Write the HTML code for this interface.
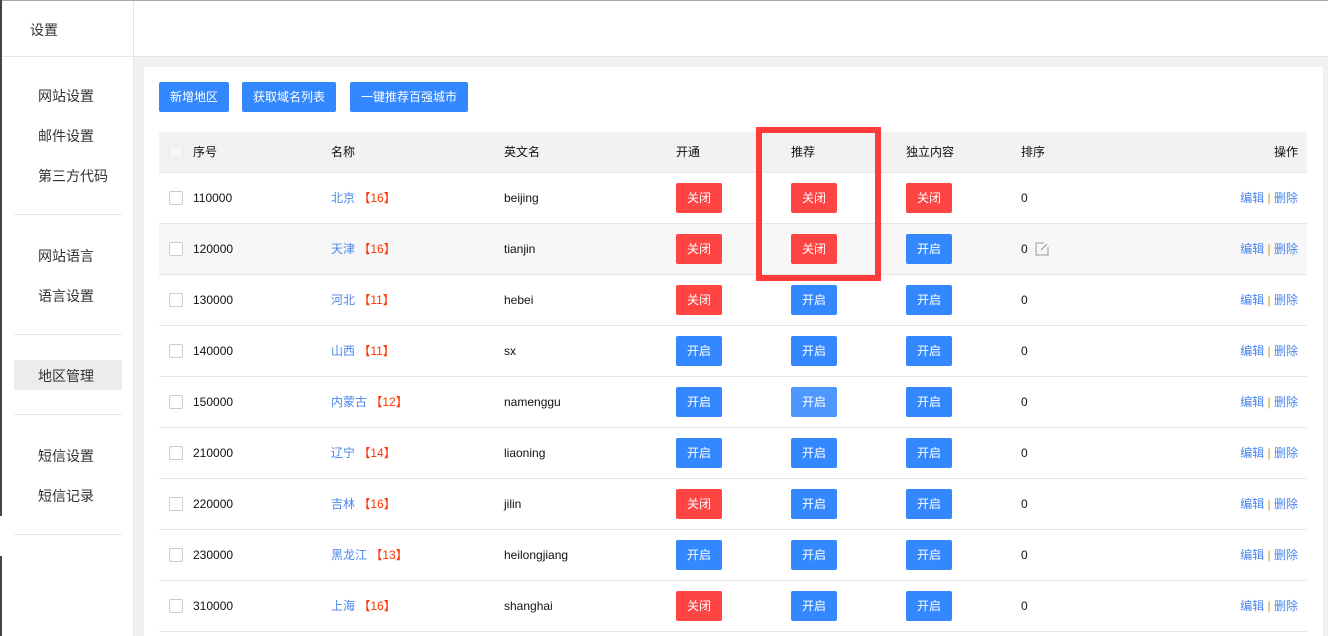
<!DOCTYPE html>
<html><head><meta charset="utf-8"><style>
*{margin:0;padding:0;box-sizing:border-box}
body{width:1328px;height:636px;overflow:hidden;background:#fff;font-family:"Liberation Sans","Noto Sans CJK SC",sans-serif;font-size:12px;color:#111;position:relative}
.a{position:absolute}
.side{left:0;top:0;width:134px;height:636px;background:#fff;border-right:1px solid #e6e6e6}
.nav{position:absolute;left:38px;font-size:14px;color:#333}
.hr{position:absolute;left:14px;width:108px;height:1px;background:#e6e6e6}
.btn{position:absolute;height:30px;line-height:30px;color:#fff;background:#3388ff;border-radius:2px;font-size:12px;text-align:center}
.b{position:absolute;width:46px;height:30px;line-height:30px;color:#fff;border-radius:2px;font-size:12px;text-align:center}
.r{background:#ff4444}.g{background:#3388ff}
.row{position:absolute;left:159px;width:1148px;height:51px;border-bottom:1px solid #e6e6e6}
.cb{position:absolute;left:10px;width:14px;height:14px;border:1px solid #ccc;border-radius:2px;top:18px;background:#fff}
.t{position:absolute;top:18px;line-height:14px}
</style></head><body>
<div class="a" style="left:134px;top:56px;width:1194px;height:580px;background:#f0f0f0;border-top:1px solid #e2e2e2"></div>
<div class="a" style="left:144px;top:67px;width:1179px;height:569px;background:#fff"></div>
<div class="a side"></div>
<div class="a" style="left:0;top:0;width:1328px;height:1px;background:#aaa"></div>
<div class="a" style="left:0;top:56px;width:134px;height:1px;background:#e6e6e6"></div>
<div class="a" style="left:0;top:0;width:2px;height:516px;background:#444"></div>
<div class="a" style="left:0;top:556px;width:2px;height:80px;background:#444"></div>
<div class="nav" style="left:30px;top:20px">设置</div>
<div class="nav" style="top:86px">网站设置</div>
<div class="nav" style="top:126px">邮件设置</div>
<div class="nav" style="top:166px">第三方代码</div>
<div class="hr" style="top:214px"></div>
<div class="nav" style="top:246px">网站语言</div>
<div class="nav" style="top:286px">语言设置</div>
<div class="hr" style="top:334px"></div>
<div class="a" style="left:14px;top:360px;width:108px;height:30px;background:#ebecee;border-radius:2px"></div>
<div class="nav" style="top:366px">地区管理</div>
<div class="hr" style="top:414px"></div>
<div class="nav" style="top:446px">短信设置</div>
<div class="nav" style="top:486px">短信记录</div>
<div class="hr" style="top:534px"></div>

<div class="btn" style="left:159px;top:82px;width:70px">新增地区</div>
<div class="btn" style="left:242px;top:82px;width:94px">获取域名列表</div>
<div class="btn" style="left:350px;top:82px;width:118px">一键推荐百强城市</div>

<div class="a" style="left:159px;top:132px;width:1148px;height:41px;background:#f2f2f2;border-bottom:1px solid #e6e6e6">
<div class="cb" style="top:13px;background:#f5f5f5;border-color:#e6e6e6"></div>
<div class="t" style="top:13px;left:34px">序号</div><div class="t" style="top:13px;left:172px">名称</div><div class="t" style="top:13px;left:345px">英文名</div><div class="t" style="top:13px;left:517px">开通</div><div class="t" style="top:13px;left:632px">推荐</div><div class="t" style="top:13px;left:747px">独立内容</div><div class="t" style="top:13px;left:862px">排序</div><div class="t" style="top:13px;right:9px">操作</div>
</div>
<div id="rows"></div>
<script>
var d=[["110000","北京","16","beijing","r","r","r"],["120000","天津","16","tianjin","r","r","g"],["130000","河北","11","hebei","r","g","g"],["140000","山西","11","sx","g","g","g"],["150000","内蒙古","12","namenggu","g","g","g"],["210000","辽宁","14","liaoning","g","g","g"],["220000","吉林","16","jilin","r","g","g"],["230000","黑龙江","13","heilongjiang","g","g","g"],["310000","上海","16","shanghai","r","g","g"]];
var h="";
d.forEach(function(x,i){var y=173+i*51;var bg=i==1?"#f7f7f7":"#fff";
function bt(c,l,k){var s=c=="r"?"关闭":"开启";var st=(i==4&&k==1)?"background:#4d97ff;":"";return '<div class="b '+c+'" style="left:'+l+'px;top:10px;'+st+'">'+s+'</div>';}
h+='<div class="row" style="top:'+y+'px;background:'+bg+'"><div class="cb"></div><div class="t" style="left:34px">'+x[0]+'</div><div class="t" style="left:172px;color:#4a86ee">'+x[1]+' <span style="color:#ff3300">【'+x[2]+'】</span></div><div class="t" style="left:345px">'+x[3]+'</div>'+bt(x[4],517,0)+bt(x[5],632,1)+bt(x[6],747,2)+'<div class="t" style="left:862px">0</div>'+(i==1?'<svg class="a" style="left:876px;top:18px" width="14" height="14"><path d="M9 1H1v12h12V5" fill="none" stroke="#999"/><path d="M6 8L12 2" stroke="#999"/></svg>':'')+'<div class="t" style="right:9px;color:#4a86ee">编辑 <span style="color:#c90">|</span> 删除</div></div>';});
document.getElementById("rows").innerHTML=h;
</script>
<div class="a" style="left:756px;top:127px;width:125px;height:154px;border:6px solid #ff3b3b"></div>
</body></html>
